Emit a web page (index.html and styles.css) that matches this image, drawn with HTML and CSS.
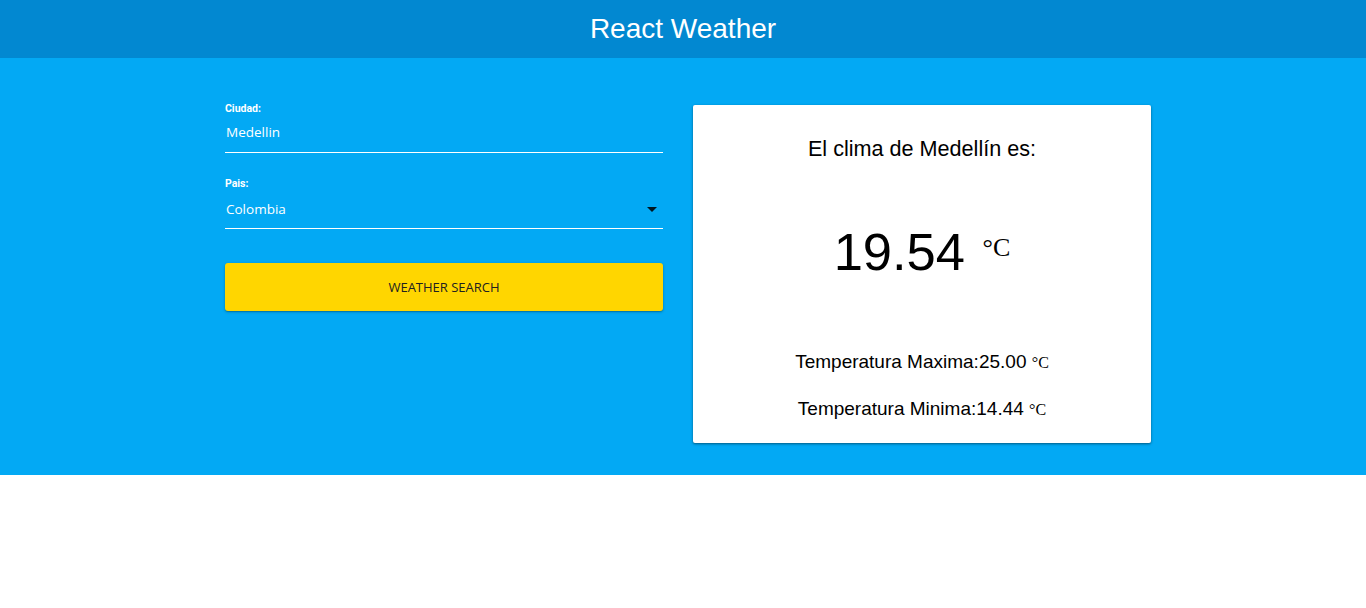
FILE: index.html
```html
<!DOCTYPE html>
<html lang="es">
<head>
<meta charset="utf-8">
<title>React Weather</title>
<link rel="stylesheet" href="styles.css">
</head>
<body>
<header class="app-bar">
  <h1 class="app-title">React Weather</h1>
</header>
<main class="hero">
  <div class="wrap">
    <form class="search-form">
      <div class="field">
        <label class="field-label">Ciudad:</label>
        <div class="field-input">Medellin</div>
      </div>
      <div class="field">
        <label class="field-label">Pais:</label>
        <div class="field-input select">
          <span>Colombia</span>
          <span class="caret"></span>
        </div>
      </div>
      <button type="button" class="search-btn">WEATHER SEARCH</button>
    </form>
    <section class="card">
      <h2 class="card-title">El clima de Medellín es:</h2>
      <div class="temp-main">19.54 <span class="unit-big">°C</span></div>
      <p class="temp-line">Temperatura Maxima:25.00 <span class="unit-small">°C</span></p>
      <p class="temp-line">Temperatura Minima:14.44 <span class="unit-small">°C</span></p>
    </section>
  </div>
</main>
</body>
</html>
```

FILE: styles.css
```css
* { box-sizing: border-box; }
html, body { margin: 0; padding: 0; background: #fff; }
body { font-family: "Liberation Sans", Arial, sans-serif; }

.app-bar {
  height: 58px;
  background: #0288d1;
  display: flex;
  align-items: center;
  justify-content: center;
}
.app-title {
  margin: 0;
  color: #fff;
  font-weight: 400;
  font-size: 28px;
  font-family: "Liberation Sans", Arial, sans-serif;
}

.hero {
  background: #03a9f4;
  padding: 47px 0 32px;
}
.wrap {
  width: 936px;
  margin: 0 auto;
  padding-left: 10px;
  display: flex;
  gap: 30px;
  align-items: flex-start;
}

.search-form {
  width: 438px;
  display: flex;
  flex-direction: column;
}
.field {
  display: flex;
  flex-direction: column;
  border-bottom: 1px solid #fff;
  margin-bottom: 27px;
}
.field-label {
  font-family: Roboto, "Liberation Sans", sans-serif;
  font-weight: 700;
  font-size: 10.5px;
  color: #fff;
  line-height: 12px;
  margin-top: -2px;
}
.field-input {
  font-family: "Open Sans", "Liberation Sans", sans-serif;
  font-size: 13.5px;
  color: #fff;
  height: 37px;
  display: flex;
  align-items: center;
  padding-left: 1px;
  padding-bottom: 3px;
}
.field-input.select {
  justify-content: space-between;
  height: 38px;
  padding-bottom: 1px;
}
.caret {
  width: 0; height: 0;
  border-left: 5px solid transparent;
  border-right: 5px solid transparent;
  border-top: 5px solid rgba(0,0,0,0.87);
  margin-right: 6px;
  margin-top: 1px;
}

.search-btn {
  margin-top: 7px;
  height: 48px;
  width: 100%;
  border: none;
  border-radius: 3px;
  background: #ffd600;
  color: #212121;
  font-family: "Open Sans", "Liberation Sans", sans-serif;
  font-size: 13px;
  box-shadow: 0 1px 3px rgba(0,0,0,0.25), 0 1px 1px rgba(0,0,0,0.15);
  padding: 0;
}

.card {
  width: 458px;
  height: 338px;
  background: #fff;
  border-radius: 2px;
  box-shadow: 0 1px 3px rgba(0,0,0,0.3), 0 1px 2px rgba(0,0,0,0.2);
  text-align: center;
  color: #000;
  padding-top: 31px;
}
.card-title {
  margin: 0;
  font-weight: 400;
  font-size: 21.6px;
  line-height: 26px;
}
.temp-main {
  margin-top: 54px;
  font-size: 52.5px;
  line-height: 64px;
}
.unit-big {
  font-family: "Liberation Serif", "Times New Roman", serif;
  font-size: 26px;
  vertical-align: 14px;
  margin-left: 3px;
}
.temp-line {
  margin: 0;
  font-size: 19px;
  line-height: 22px;
}
.temp-main + .temp-line { margin-top: 67px; }
.temp-line + .temp-line { margin-top: 24px; }
.unit-small {
  font-family: "Liberation Serif", "Times New Roman", serif;
  font-size: 16px;
}
```
